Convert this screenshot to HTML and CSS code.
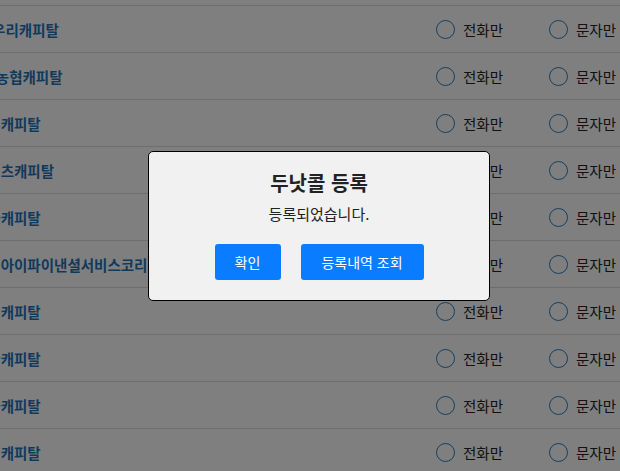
FILE: index.html
```html
<!DOCTYPE html>
<html lang="ko">
<head>
<meta charset="utf-8">
<title>두낫콜 등록</title>
<link rel="stylesheet" href="styles.css">
</head>
<body>
<div class="list">
  <div class="row"><span class="name">KB캐피탈</span><label class="opt"><span class="radio"></span>전화만</label><label class="opt"><span class="radio"></span>문자만</label></div>
  <div class="row"><span class="name">JB우리캐피탈</span><label class="opt"><span class="radio"></span>전화만</label><label class="opt"><span class="radio"></span>문자만</label></div>
  <div class="row"><span class="name">NH농협캐피탈</span><label class="opt"><span class="radio"></span>전화만</label><label class="opt"><span class="radio"></span>문자만</label></div>
  <div class="row"><span class="name">롯데캐피탈</span><label class="opt"><span class="radio"></span>전화만</label><label class="opt"><span class="radio"></span>문자만</label></div>
  <div class="row"><span class="name">메리츠캐피탈</span><label class="opt"><span class="radio"></span>전화만</label><label class="opt"><span class="radio"></span>문자만</label></div>
  <div class="row"><span class="name">하나캐피탈</span><label class="opt"><span class="radio"></span>전화만</label><label class="opt"><span class="radio"></span>문자만</label></div>
  <div class="row"><span class="name">알씨아이파이낸셜서비스코리아</span><label class="opt"><span class="radio"></span>전화만</label><label class="opt"><span class="radio"></span>문자만</label></div>
  <div class="row"><span class="name">미래캐피탈</span><label class="opt"><span class="radio"></span>전화만</label><label class="opt"><span class="radio"></span>문자만</label></div>
  <div class="row"><span class="name">신한캐피탈</span><label class="opt"><span class="radio"></span>전화만</label><label class="opt"><span class="radio"></span>문자만</label></div>
  <div class="row"><span class="name">산와캐피탈</span><label class="opt"><span class="radio"></span>전화만</label><label class="opt"><span class="radio"></span>문자만</label></div>
  <div class="row"><span class="name">현대캐피탈</span><label class="opt"><span class="radio"></span>전화만</label><label class="opt"><span class="radio"></span>문자만</label></div>
</div>
<div class="overlay"></div>
<div class="modal">
  <h2 class="modal-title">두낫콜 등록</h2>
  <p class="modal-msg">등록되었습니다.</p>
  <div class="modal-actions">
    <button class="btn btn-ok">확인</button>
    <button class="btn btn-view">등록내역 조회</button>
  </div>
</div>
</body>
</html>
```
FILE: styles.css
```css
html, body {
  margin: 0;
  padding: 0;
  overflow: hidden;
  background: #fff;
  font-family: "Noto Sans CJK KR", "Noto Sans", sans-serif;
}
body {
  width: 620px;
  height: 471px;
}
.list {
  margin-top: -41px;
  margin-left: -26px;
  width: 720px;
}
.row {
  display: grid;
  grid-template-columns: 462px 113px auto;
  align-items: center;
  height: 46px;
  border-bottom: 1px solid #dcdcdc;
}
.name {
  font-size: 14.5px;
  font-weight: 700;
  color: #1f74b8;
  white-space: nowrap;
  overflow: hidden;
}
.opt {
  display: flex;
  align-items: center;
  gap: 8px;
  font-size: 14.5px;
  color: #222;
  white-space: nowrap;
}
.radio {
  width: 17px;
  height: 17px;
  border: 1.5px solid #2a80c0;
  border-radius: 50%;
  background: #fff;
  flex: none;
}
.overlay {
  position: fixed;
  inset: 0;
  background: rgba(0, 0, 0, 0.5);
}
.modal {
  position: absolute;
  left: 148px;
  top: 151px;
  width: 340px;
  box-sizing: content-box;
  border: 1px solid #000;
  border-radius: 5px;
  background: #f1f1f1;
  padding: 16px 0 20px;
  text-align: center;
}
.modal-title {
  margin: 0;
  font-size: 20px;
  line-height: 30px;
  font-weight: 700;
  color: #222;
}
.modal-msg {
  margin: 5px 0 0;
  font-size: 15px;
  line-height: 22px;
  color: #222;
}
.modal-actions {
  margin-top: 19px;
  display: flex;
  justify-content: center;
  gap: 20px;
}
.btn {
  height: 36px;
  border: 0;
  border-radius: 3px;
  background: #0a7cff;
  color: #fff;
  font-family: inherit;
  font-size: 14px;
  padding: 0;
  cursor: pointer;
}
.btn-ok { width: 66px; }
.btn-view { width: 123px; }
```
